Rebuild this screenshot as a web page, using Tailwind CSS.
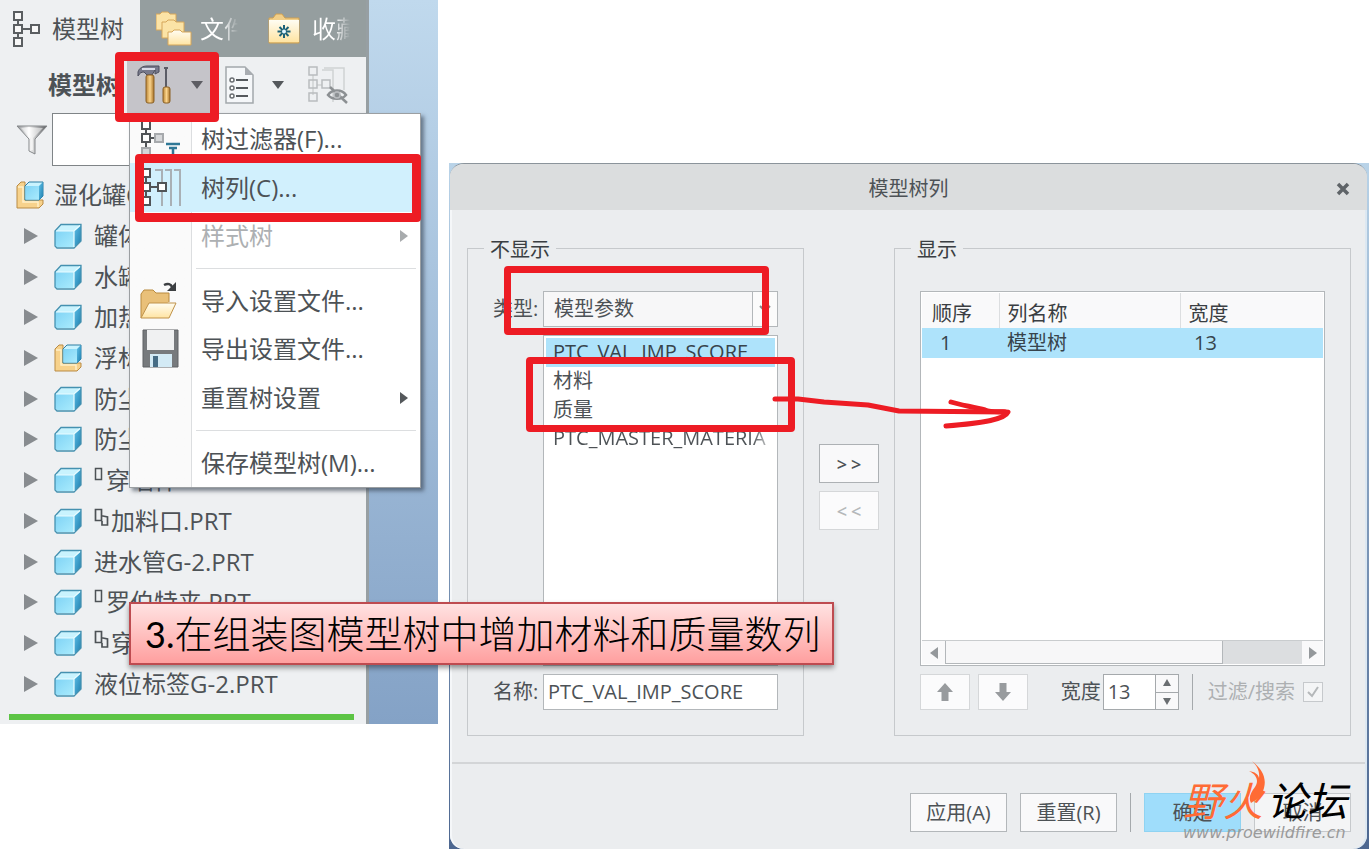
<!DOCTYPE html>
<html lang="zh-CN">
  <head>
    <meta charset="UTF-8" />
    <meta name="viewport" content="width=device-width, initial-scale=1.0" />
    <title>模型树列</title>
    <script src="https://cdn.jsdelivr.net/npm/@tailwindcss/browser@4"></script>
  </head>
  <body class="bg-white text-[#4d5256] font-['Open_Sans','Noto_Sans_CJK_SC',sans-serif]">

    <!-- Shared icons -->
    <svg class="absolute size-0" aria-hidden="true">
      <defs>
        <linearGradient id="face" x1="0" y1="0" x2="1" y2="1">
          <stop offset="0" stop-color="#7fd3f5" />
          <stop offset="1" stop-color="#a9ebfd" />
        </linearGradient>
        <linearGradient id="side" x1="0" y1="0" x2="1" y2="1">
          <stop offset="0" stop-color="#5fc0e8" />
          <stop offset="1" stop-color="#1f7fae" />
        </linearGradient>
        <linearGradient id="sheet" x1="0" y1="0" x2="0" y2="1">
          <stop offset="0" stop-color="#fffdf3" />
          <stop offset="1" stop-color="#ffe4a3" />
        </linearGradient>
        <linearGradient id="steel" x1="0" y1="0" x2="1" y2="0">
          <stop offset="0" stop-color="#8a8d90" />
          <stop offset="0.4" stop-color="#ffffff" />
          <stop offset="1" stop-color="#55585b" />
        </linearGradient>
        <linearGradient id="wood" x1="0" y1="0" x2="1" y2="0">
          <stop offset="0" stop-color="#b98536" />
          <stop offset="0.5" stop-color="#fbd48c" />
          <stop offset="1" stop-color="#a87227" />
        </linearGradient>
      </defs>
      <symbol id="part" viewBox="0 0 28 26">
        <path d="M1 8 7 2H27L21 8V24H3L1 22Z" fill="#c9f3fe" />
        <path d="M1 8H20V24H3L1 22Z" fill="url(#face)" />
        <path d="M20 8 27 2V18L20 24.500Z" fill="url(#side)" />
        <path d="M1 8 7 1.500H27V18L20 25H3L1 23Z" fill="none" stroke="#4591b0" stroke-width="1.300" />
        <path d="M2 8H20L26 2.500M20 8V24" fill="none" stroke="#eafcff" stroke-width="1.200" />
      </symbol>
      <symbol id="assembly" viewBox="0 0 28 28">
        <path d="M1 5 5 1H9V19H27V23L23 27H1Z" fill="#f7d28c" stroke="#b98b45" />
        <path d="M2 6H7V21H22V26" fill="none" stroke="#fff0c8" stroke-width="1.500" />
        <path d="M9 5 13 1H27V15L23 19H9Z" fill="#c9f3fe" stroke="#2d7ea3" />
        <path d="M9.500 5H23V18.500H9.500Z" fill="url(#face)" />
        <path d="M23 5 27 1V15L23 19Z" fill="url(#side)" />
      </symbol>
      <symbol id="expand" viewBox="0 0 14 16">
        <path d="M0 0 14 8 0 16Z" fill="#888c90" />
      </symbol>
      <symbol id="inst" viewBox="0 0 10 14">
        <path d="M1.500 1.500H7.500V12.500H1.500Z" fill="none" stroke="#4d5256" stroke-width="1.500" />
      </symbol>
      <symbol id="family" viewBox="0 0 16 18">
        <path d="M1.500 1.500H7.500V12.500H1.500Z" fill="none" stroke="#4d5256" stroke-width="1.700" />
        <path d="M7.500 8H9L13.500 9V17H8V13" fill="none" stroke="#4d5256" stroke-width="1.700" />
      </symbol>
    </svg>

    <main class="relative flex min-h-screen items-stretch gap-[11px]">

      <!-- Model tree window -->
      <section class="relative flex w-[438px] shrink-0 flex-col self-start bg-linear-to-b from-[#c0d9ed] to-[#84a2c6] text-2xl leading-8">
        <div class="mr-[69px] border-r-3 border-[#979fa3] bg-[#eef0f2]">

          <!-- Tabs -->
          <nav class="flex h-[57px] bg-[#959e9f]">
            <button class="flex w-[140px] items-center gap-3 bg-[#eef0f2] pl-3">
              <svg class="h-10 w-7" viewBox="0 0 28 40" fill="#f8f8f8" stroke="#5a5e61" stroke-width="2">
                <path d="M6 10V30M11 20H19" />
                <rect x="2" y="3" width="8" height="8" /><rect x="2" y="16" width="8" height="8" />
                <rect x="2" y="29" width="8" height="8" /><rect x="19" y="16" width="8" height="8" />
              </svg>
              <span>模型树</span>
            </button>
            <button class="flex items-center gap-2 pl-4">
              <svg class="h-9 w-9" viewBox="0 0 36 36" fill="#fbe3a6" stroke="#d5a65a">
                <path d="M0 3H4L6 1H12L14 3H20V19H0Z" />
                <path d="M6 11H10L12 9H18L20 11H28V27H6Z" />
                <path d="M12 21H16L18 19H24L26 21H35V34H12Z" fill="url(#sheet)" />
              </svg>
              <span class="w-10 overflow-hidden whitespace-nowrap bg-linear-to-r from-white from-55% to-white/0 to-95% bg-clip-text text-transparent">文件</span>
            </button>
            <button class="flex items-center gap-3 pl-7">
              <svg class="h-8 w-8" viewBox="0 0 32 32">
                <path d="M1 5H5L8 1H14L17 5H31V30H1Z" fill="#f2cf88" stroke="#cda052" />
                <path d="M1 7H31V29H1Z" fill="url(#sheet)" />
                <path d="M16 12V25M9.500 18.500H22.500M11.500 14 20.500 23M20.500 14 11.500 23" stroke="#1c6177" stroke-width="2" />
                <circle cx="16" cy="18.500" r="2" fill="#e3f6ff" />
              </svg>
              <span class="w-10 overflow-hidden whitespace-nowrap bg-linear-to-r from-white from-55% to-white/0 to-95% bg-clip-text text-transparent">收藏</span>
            </button>
          </nav>

          <!-- Toolbar -->
          <div class="flex h-14 items-center pl-12">
            <h1 class="w-[79px] overflow-hidden whitespace-nowrap font-bold">模型树</h1>
            <button class="flex h-14 w-[85px] items-center gap-4 bg-[#c5c4c9] pl-2" aria-label="设置">
              <svg class="h-10 w-10" viewBox="0 0 40 40">
                <path d="M3 7C4 3 8 1 12 1H24V7L20 9V5L17 10H12L9 7C6 7 5 8 3 11Z" fill="#77798b" stroke="#4d4f5e" />
                <path d="M7 4H20" stroke="#d9dbe8" stroke-width="2" />
                <rect x="11" y="10" width="8" height="28" rx="2" fill="url(#wood)" stroke="#8b6126" />
                <path d="M31 3V24M29 3H33" stroke="#5b5c66" stroke-width="2" />
                <rect x="28" y="22" width="7" height="16" rx="2" fill="url(#wood)" stroke="#8b6126" />
              </svg>
              <svg class="h-2 w-3" viewBox="0 0 12 8"><path d="M0 0H12L6 8Z" fill="#5d5d63" /></svg>
            </button>
            <button class="flex items-center gap-4 pl-3" aria-label="显示">
              <svg class="h-10 w-8" viewBox="0 0 32 40">
                <path d="M2 2H21L29 10V38H2Z" fill="#f5f7f9" stroke="#a3a8ac" stroke-width="1.500" />
                <path d="M21 2V10H29Z" fill="#a9adb2" />
                <path d="M12 15H24M12 23H24M12 31H24" stroke="#55595d" stroke-width="2" />
                <g fill="#fff" stroke="#6a6e72" stroke-width="1.500"><circle cx="8" cy="15" r="2" /><circle cx="8" cy="23" r="2" /><circle cx="8" cy="31" r="2" /></g>
              </svg>
              <svg class="h-2 w-3" viewBox="0 0 12 8"><path d="M0 0H12L6 8Z" fill="#54585c" /></svg>
            </button>
            <button class="pl-6" aria-label="隐藏">
              <svg class="h-10 w-10" viewBox="0 0 40 40" fill="none" stroke="#b9bcbf" stroke-width="1.500">
                <path d="M5 10V30M9 20H14M14 5H25V37M16 3H36V25" stroke="#cfd2d4" />
                <rect x="1" y="2" width="8" height="8" /><rect x="1" y="15" width="8" height="8" />
                <rect x="1" y="28" width="8" height="8" /><rect x="14" y="15" width="8" height="8" />
                <path d="M20 30C24 24 34 24 38 30C34 35 24 35 20 30ZM22 22 39 38" stroke="#8c9093" stroke-width="2.500" />
                <circle cx="29" cy="30" r="3" fill="#8c9093" />
              </svg>
            </button>
          </div>

          <!-- Filter -->
          <div class="flex h-[53px] items-center gap-1 pl-4">
            <svg class="h-8 w-8" viewBox="0 0 32 32">
              <path d="M1 2H31L19 15V30L13 27V15Z" fill="url(#steel)" stroke="#85888b" />
              <path d="M5 4H27L17 14V26H15V14Z" fill="#fff" opacity="0.500" />
            </svg>
            <input type="text" aria-label="过滤器" class="h-[53px] w-60 border border-[#7f8487] bg-white px-2" />
          </div>

          <!-- Tree -->
          <ul class="mt-[9px] grid h-[529px] auto-rows-fr whitespace-nowrap">
            <li class="flex items-center gap-[10px] pl-4"><svg class="size-7"><use href="#assembly" /></svg>湿化罐G</li>
            <li class="flex items-center pl-6"><svg class="mr-4 h-4 w-[14px]"><use href="#expand" /></svg><svg class="mr-3 h-[26px] w-7"><use href="#part" /></svg>罐体</li>
            <li class="flex items-center pl-6"><svg class="mr-4 h-4 w-[14px]"><use href="#expand" /></svg><svg class="mr-3 h-[26px] w-7"><use href="#part" /></svg>水罐</li>
            <li class="flex items-center pl-6"><svg class="mr-4 h-4 w-[14px]"><use href="#expand" /></svg><svg class="mr-3 h-[26px] w-7"><use href="#part" /></svg>加热</li>
            <li class="flex items-center pl-6"><svg class="mr-4 h-4 w-[14px]"><use href="#expand" /></svg><svg class="mr-3 size-7"><use href="#assembly" /></svg>浮标</li>
            <li class="flex items-center pl-6"><svg class="mr-4 h-4 w-[14px]"><use href="#expand" /></svg><svg class="mr-3 h-[26px] w-7"><use href="#part" /></svg>防尘</li>
            <li class="flex items-center pl-6"><svg class="mr-4 h-4 w-[14px]"><use href="#expand" /></svg><svg class="mr-3 h-[26px] w-7"><use href="#part" /></svg>防尘</li>
            <li class="flex items-center pl-6"><svg class="mr-4 h-4 w-[14px]"><use href="#expand" /></svg><svg class="mr-3 h-[26px] w-7"><use href="#part" /></svg><svg class="mr-[2px] mb-3 h-[14px] w-[10px]"><use href="#inst" /></svg>穿墙件</li>
            <li class="flex items-center pl-6"><svg class="mr-4 h-4 w-[14px]"><use href="#expand" /></svg><svg class="mr-3 h-[26px] w-7"><use href="#part" /></svg><svg class="mr-[1px] mb-2 h-[18px] w-4"><use href="#family" /></svg>加料口.PRT</li>
            <li class="flex items-center pl-6"><svg class="mr-4 h-4 w-[14px]"><use href="#expand" /></svg><svg class="mr-3 h-[26px] w-7"><use href="#part" /></svg>进水管G-2.PRT</li>
            <li class="flex items-center pl-6"><svg class="mr-4 h-4 w-[14px]"><use href="#expand" /></svg><svg class="mr-3 h-[26px] w-7"><use href="#part" /></svg><svg class="mr-[2px] mb-3 h-[14px] w-[10px]"><use href="#inst" /></svg>罗伯特夹.PRT</li>
            <li class="flex items-center pl-6"><svg class="mr-4 h-4 w-[14px]"><use href="#expand" /></svg><svg class="mr-3 h-[26px] w-7"><use href="#part" /></svg><svg class="mr-[1px] mb-2 h-[18px] w-4"><use href="#family" /></svg>穿</li>
            <li class="flex items-center pl-6"><svg class="mr-4 h-4 w-[14px]"><use href="#expand" /></svg><svg class="mr-3 h-[26px] w-7"><use href="#part" /></svg>液位标签G-2.PRT</li>
          </ul>
          <div class="mt-[10px] mr-3 mb-1 ml-[9px] h-[6px] bg-[#5cc445]"></div>
        </div>

        <!-- Settings menu -->
        <div role="menu" class="absolute top-[113px] left-[129px] w-[292px] border border-[#9b9fa2] bg-white bg-linear-to-r from-[#fafafa] from-[61px] to-white to-[61px] shadow-[3px_3px_4px_rgba(50,60,75,0.6)]">
          <button role="menuitem" class="flex h-[49px] w-full items-center text-left">
            <span class="flex h-full w-[62px] items-center border-r border-[#dcdee0] pl-2">
              <svg class="size-12" viewBox="0 0 48 48" fill="#fff" stroke="#505457" stroke-width="2">
                <path d="M8 10V36M12 23H20" />
                <rect x="4" y="6" width="8" height="8" /><rect x="4" y="19" width="8" height="8" />
                <g fill="#d5d7d9" stroke="#a6a9ac"><rect x="4" y="33" width="8" height="8" /><rect x="17" y="19" width="8" height="8" /></g>
                <path d="M28 29H42M31 33H39M35 33V39" stroke="#2f7896" stroke-width="2.500" />
              </svg>
            </span>
            <span class="pl-[9px]">树过滤器(F)...</span>
          </button>
          <button role="menuitem" class="flex h-[49px] w-full items-center bg-[#d1f0fd] text-left">
            <span class="flex h-full w-[62px] items-center pl-2">
              <svg class="size-12" viewBox="0 0 48 48" fill="#fff" stroke="#505457" stroke-width="2">
                <path d="M17 6H24V42M27 6H33V42M36 6H42V42" fill="none" stroke="#a9b0b5" />
                <path d="M8 10V38M12 23H20" />
                <rect x="4" y="5" width="8" height="8" /><rect x="4" y="19" width="8" height="8" />
                <rect x="4" y="33" width="8" height="8" /><rect x="20" y="19" width="8" height="8" />
              </svg>
            </span>
            <span class="pl-[9px]">树列(C)...</span>
          </button>
          <button role="menuitem" disabled class="flex h-12 w-full items-center text-left text-[#adb0b2]">
            <span class="h-full w-[62px] border-r border-[#dcdee0]"></span>
            <span class="flex-1 pl-[9px]">样式树</span>
            <svg class="mr-3 h-3 w-2" viewBox="0 0 8 12"><path d="M0 0 8 6 0 12Z" fill="#a8abad" /></svg>
          </button>
          <div class="ml-[61px] flex h-4 items-center border-l border-[#dcdee0]"><hr class="mr-1 ml-1 flex-1 border-[#dcdee0]" /></div>
          <button role="menuitem" class="flex h-[49px] w-full items-center text-left">
            <span class="flex h-full w-[62px] items-center border-r border-[#dcdee0] pl-2">
              <svg class="size-12" viewBox="0 0 48 48">
                <path d="M3 41V17L6 13H15L18 16H31V25" fill="#e9c079" stroke="#b98a3e" />
                <path d="M3 41 11 26H38L31 41Z" fill="url(#sheet)" stroke="#c0924a" />
                <path d="M26 8C30 6 33 7 34 10" fill="none" stroke="#3c3f42" stroke-width="2.500" />
                <path d="M38 5V14H29Z" fill="#3c3f42" />
              </svg>
            </span>
            <span class="pl-[9px]">导入设置文件...</span>
          </button>
          <button role="menuitem" class="flex h-12 w-full items-center text-left">
            <span class="flex h-full w-[62px] items-center border-r border-[#dcdee0] pl-2">
              <svg class="size-12" viewBox="0 0 48 48">
                <path d="M5 5H40V42H5Z" fill="#777a7d" stroke="#606366" />
                <path d="M9 5H36V25H9Z" fill="#f0f1f2" />
                <path d="M12 29H34V42H12Z" fill="#d3eaf5" />
                <path d="M15 31H20V42H15Z" fill="#466c85" />
              </svg>
            </span>
            <span class="pl-[9px]">导出设置文件...</span>
          </button>
          <button role="menuitem" class="flex h-[49px] w-full items-center text-left">
            <span class="h-full w-[62px] border-r border-[#dcdee0]"></span>
            <span class="flex-1 pl-[9px]">重置树设置</span>
            <svg class="mr-3 h-3 w-2" viewBox="0 0 8 12"><path d="M0 0 8 6 0 12Z" fill="#54585b" /></svg>
          </button>
          <div class="ml-[61px] flex h-4 items-center border-l border-[#dcdee0]"><hr class="mr-1 ml-1 flex-1 border-[#dcdee0]" /></div>
          <button role="menuitem" class="flex h-[49px] w-full items-center text-left">
            <span class="h-full w-[62px] border-r border-[#dcdee0]"></span>
            <span class="pl-[9px]">保存模型树(M)...</span>
          </button>
        </div>

        <!-- Red marks -->
        <div class="absolute top-[52px] left-[115px] h-[70px] w-[104px] rounded-sm border-9 border-[#ed1c24]"></div>
        <div class="absolute top-[154px] left-[135px] h-[68px] w-[286px] rounded-sm border-9 border-[#ed1c24]"></div>
      </section>

      <!-- Column dialog -->
      <section class="relative mt-[163px] flex flex-1 bg-linear-to-b from-[#b9d3e8] to-[#4d6790] text-xl leading-7">
        <div class="mr-[2px] ml-px flex flex-1 flex-col overflow-hidden rounded-[14px] border-t border-[#8b949b] bg-[#ebedef] shadow-[inset_2px_0_0_#f5f7f9,inset_-2px_0_0_#dce8f2]">
          <header class="flex h-[46px] items-center bg-[#dbddde] px-4 pt-1">
            <h2 class="flex-1 pl-4 text-center">模型树列</h2>
            <button aria-label="关闭">
              <svg class="size-4" viewBox="0 0 16 16"><path d="M3 3 13 13M13 3 3 13" stroke="#5f6468" stroke-width="3.500" /></svg>
            </button>
          </header>

          <div class="flex flex-1 items-stretch pt-[22px] pr-4 pb-[26px] pl-[17px]">
            <fieldset class="w-[337px] border border-[#c6c9cc] px-4">
              <legend class="px-[6px] pt-1 text-[#3a3e42]">不显示</legend>
              <div class="grid h-full grid-cols-[44px_1fr] grid-rows-[36px_1fr_36px] gap-x-[6px] gap-y-2 px-[9px] pt-[27px] pb-[25px]">
                <label for="kind" class="self-center whitespace-nowrap">类型:</label>
                <div class="relative">
                  <select id="kind" class="h-9 w-full appearance-none border border-[#b3b7ba] bg-[#f7f7f8] pl-[10px]">
                    <option>模型参数</option>
                  </select>
                  <span class="pointer-events-none absolute inset-y-0 right-0 flex w-[26px] items-center justify-center border border-[#b3b7ba] bg-[#fbfbfb]">
                    <svg class="h-2 w-3" viewBox="0 0 12 8"><path d="M1 1 6 6 11 1" fill="none" stroke="#85898c" stroke-width="2" /></svg>
                  </span>
                </div>
                <ul role="listbox" aria-label="参数" class="col-start-2 min-w-0 overflow-hidden border border-[#b3b7ba] bg-white p-[2px] whitespace-nowrap">
                  <li role="option" aria-selected="true" class="h-[29px] bg-[#aee3fb] pl-[7px] text-[#37444c]">PTC_VAL_IMP_SCORE</li>
                  <li role="option" class="h-[29px] pl-[7px]">材料</li>
                  <li role="option" class="h-7 pl-[7px]">质量</li>
                  <li role="option" class="h-[29px] overflow-hidden bg-linear-to-r from-[#4d5256] from-90% to-white bg-clip-text pl-[7px] text-transparent">PTC_MASTER_MATERIA</li>
                </ul>
                <label for="name" class="self-center whitespace-nowrap">名称:</label>
                <input id="name" type="text" value="PTC_VAL_IMP_SCORE" class="min-w-0 border border-[#b3b7ba] bg-white pl-1" />
              </div>
            </fieldset>

            <div class="flex w-[90px] flex-col items-center gap-2 pt-[212px]">
              <button class="flex h-[39px] w-[60px] items-center justify-center border border-[#adb1b4] bg-[#f9f9fa]" aria-label="添加">
                <span class="flex gap-1 text-lg font-semibold"><span>&gt;</span><span>&gt;</span></span>
              </button>
              <button disabled class="flex h-[39px] w-[60px] items-center justify-center border border-[#d5d7d9] bg-[#fbfbfc] text-[#b5b8ba]" aria-label="移除">
                <span class="flex gap-1 text-lg font-semibold"><span>&lt;</span><span>&lt;</span></span>
              </button>
            </div>

            <fieldset class="min-w-0 flex-1 border border-[#c6c9cc] px-4">
              <legend class="px-[6px] pt-1 text-[#3a3e42]">显示</legend>
              <div class="flex h-full flex-col gap-2 px-[9px] pt-[27px] pb-[25px]">
                <div class="flex flex-1 flex-col border border-[#b3b7ba] bg-white p-px">
                  <table class="w-full table-fixed text-left">
                    <thead>
                      <tr class="h-[35px] bg-[#f9f9fa] text-[#3a3e42]">
                        <th class="w-[77px] border-r border-[#dcdee0] pt-[6px] pl-[10px] font-normal">顺序</th>
                        <th class="w-[181px] border-r border-[#dcdee0] pt-[6px] pl-2 font-normal">列名称</th>
                        <th class="pt-[6px] pl-2 font-normal">宽度</th>
                      </tr>
                    </thead>
                    <tbody>
                      <tr class="h-[30px] bg-[#aee3fb] text-[#37444c]">
                        <td class="pl-[18px]">1</td>
                        <td class="pl-2">模型树</td>
                        <td class="pl-[14px]">13</td>
                      </tr>
                    </tbody>
                  </table>
                  <div class="mt-auto flex h-6 border-t border-[#c9ccce] bg-[#dcdee0]">
                    <button class="flex w-[23px] items-center justify-center bg-[#f9f9fa]" aria-label="向左"><svg class="h-3 w-2" viewBox="0 0 8 12"><path d="M8 0 0 6 8 12Z" fill="#94989b" /></svg></button>
                    <div class="w-[278px] border-x border-b border-[#b3b7ba] bg-[#f7f7f8]"></div>
                    <button class="ml-auto flex w-[21px] items-center justify-center bg-[#f9f9fa]" aria-label="向右"><svg class="h-3 w-2" viewBox="0 0 8 12"><path d="M0 0 8 6 0 12Z" fill="#94989b" /></svg></button>
                  </div>
                </div>
                <div class="flex h-9 items-center">
                  <button disabled class="mr-2 flex h-9 w-[50px] items-center justify-center border border-[#d5d7d9] bg-[#fbfbfc]" aria-label="上移"><svg class="h-[18px] w-4" viewBox="0 0 16 18"><path d="M8 0 16 9H11.500V18H4.500V9H0Z" fill="#989b9e" /></svg></button>
                  <button disabled class="flex h-9 w-[50px] items-center justify-center border border-[#d5d7d9] bg-[#fbfbfc]" aria-label="下移"><svg class="h-[18px] w-4" viewBox="0 0 16 18"><path d="M8 18 0 9H4.500V0H11.500V9H16Z" fill="#989b9e" /></svg></button>
                  <label for="width" class="ml-auto pr-[2px]">宽度</label>
                  <span class="flex h-9 w-[76px] border border-[#a5a9ac] bg-white">
                    <input id="width" type="text" value="13" class="w-[51px] pl-1" />
                    <span class="flex flex-1 flex-col divide-y divide-[#a5a9ac] border-l border-[#a5a9ac] bg-[#f9f9fa]">
                      <button class="flex flex-1 items-center justify-center" aria-label="增加"><svg class="size-2" viewBox="0 0 8 8"><path d="M0 7 4 0 8 7Z" fill="#6a6e71" /></svg></button>
                      <button class="flex flex-1 items-center justify-center" aria-label="减少"><svg class="size-2" viewBox="0 0 8 8"><path d="M0 1 4 8 8 1Z" fill="#6a6e71" /></svg></button>
                    </span>
                  </span>
                  <span class="mx-[13px] h-9 w-px bg-[#a5a9ac]"></span>
                  <label for="search" class="pr-2 pl-[2px] text-[#adb0b2]">过滤/搜索</label>
                  <span class="relative mr-[2px] flex size-5">
                    <input id="search" type="checkbox" checked disabled class="size-5 appearance-none border border-[#c6c9cc] bg-[#f4f5f6]" />
                    <svg class="pointer-events-none absolute inset-0 size-5" viewBox="0 0 20 20"><path d="M5 10 9 14 15 5" fill="none" stroke="#b5b8ba" stroke-width="2" /></svg>
                  </span>
                </div>
              </div>
            </fieldset>
          </div>

          <footer class="mx-[2px] flex h-[87px] items-start justify-end gap-[13px] border-t-2 border-[#d3d5d7] pt-[29px] pr-[14px]">
            <button class="h-[39px] w-[97px] border border-[#b3b7ba] bg-[#f9f9fa]">应用(A)</button>
            <button class="h-[39px] w-[97px] border border-[#b3b7ba] bg-[#f9f9fa]">重置(R)</button>
            <span class="h-[39px] w-px bg-[#a5a9ac]"></span>
            <button class="h-[39px] w-[97px] border border-[#8fd3f2] bg-[#9fddfb]">确定</button>
            <button class="h-[39px] w-[97px] border border-[#c6c9cc] bg-[#f4f5f6]">取消</button>
          </footer>
        </div>

        <!-- Red marks -->
        <div class="absolute top-[103px] left-[55px] h-[69px] w-[265px] rounded-sm border-7 border-[#ed1c24]"></div>
        <div class="absolute top-[194px] left-[77px] h-[75px] w-[269px] rounded-sm border-7 border-[#ed1c24]"></div>
        <svg class="absolute top-[217px] left-[321px] h-[60px] w-[250px]" viewBox="0 0 250 60" fill="none" stroke="#ed1c24" stroke-width="5" stroke-linecap="round" stroke-linejoin="round">
          <path d="M5 19 28 19 54 22 98 25 129 31 235 32" />
          <path d="M181 22C190 25 205 27 215 30C222 33 235 31 238 32C235 39 215 43 176 46" />
        </svg>

        <!-- Forum watermark -->
        <div class="pointer-events-none absolute right-[22px] bottom-[6px] w-[164px] italic">
          <svg class="absolute -top-5 left-[64px] h-12 w-5" viewBox="0 0 20 44"><path d="M5 0C14 7 20 16 17 27C15 36 9 39 4 42C1 37 4 31 8 26C12 20 10 14 2 10C8 11 11 13 12 17C13 10 10 5 5 0Z" fill="#ff6b35" /></svg>
          <p class="flex text-[40px] leading-[44px]"><span class="text-[#ff6b35]">野火</span><span class="ml-auto text-black">论坛</span></p>
          <p class="text-base leading-5 text-[#9a9a9a] font-['DejaVu_Sans',sans-serif]">www.proewildfire.cn</p>
        </div>
      </section>

      <!-- Step caption -->
      <p class="absolute top-[602px] left-[129px] w-[705px] border-2 border-[#be4b50] bg-linear-to-b from-[#ffe2e2] to-[#ff9f9f] pl-[14px] text-[38px] leading-[58px] font-light whitespace-nowrap text-black shadow-[0_3px_5px_rgba(0,0,0,0.4)] font-['Lato','Noto_Sans_CJK_SC',sans-serif]"><span class="text-4xl leading-[58px] font-normal">3.</span>在组装图模型树中增加材料和质量数列</p>
    </main>

  </body>
</html>
